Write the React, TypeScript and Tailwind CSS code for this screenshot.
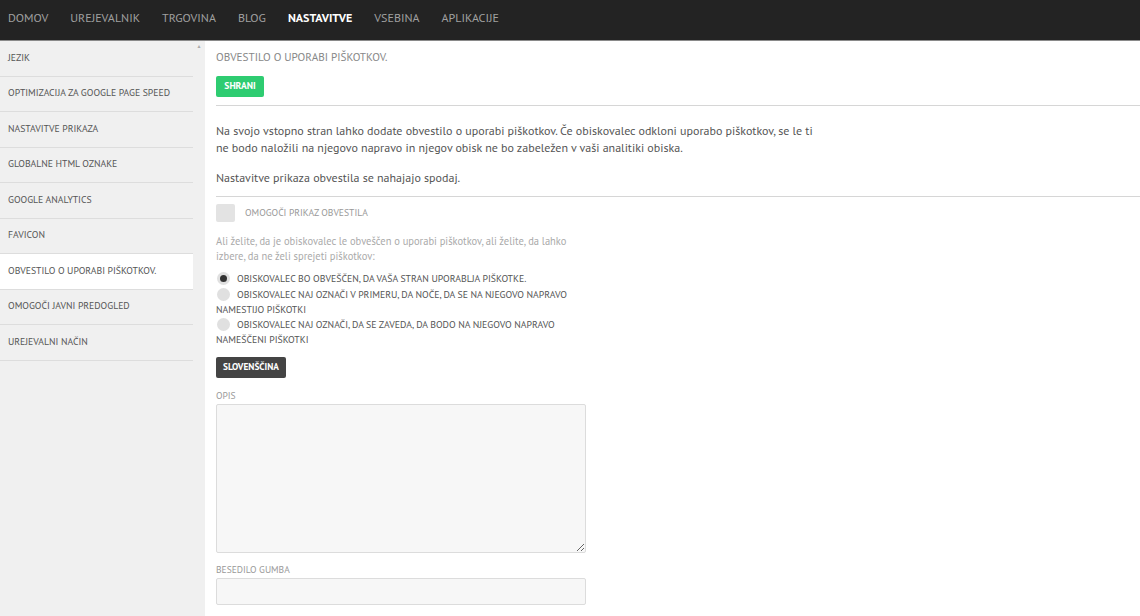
import React from 'react';

const navItems = ['DOMOV', 'UREJEVALNIK', 'TRGOVINA', 'BLOG', 'NASTAVITVE', 'VSEBINA', 'APLIKACIJE'];

const sideItems = [
    'JEZIK',
    'OPTIMIZACIJA ZA GOOGLE PAGE SPEED',
    'NASTAVITVE PRIKAZA',
    'GLOBALNE HTML OZNAKE',
    'GOOGLE ANALYTICS',
    'FAVICON',
    'OBVESTILO O UPORABI PIŠKOTKOV.',
    'OMOGOČI JAVNI PREDOGLED',
    'UREJEVALNI NAČIN',
];

const radios = [
    { label: 'OBISKOVALEC BO OBVEŠČEN, DA VAŠA STRAN UPORABLJA PIŠKOTKE.', checked: true },
    { label: 'OBISKOVALEC NAJ OZNAČI V PRIMERU, DA NOČE, DA SE NA NJEGOVO NAPRAVO NAMESTIJO PIŠKOTKI', checked: false },
    { label: 'OBISKOVALEC NAJ OZNAČI, DA SE ZAVEDA, DA BODO NA NJEGOVO NAPRAVO NAMEŠČENI PIŠKOTKI', checked: false },
];

const App: React.FC = () => {
    return (
        <div
            className="h-[616px] flex flex-col bg-white overflow-hidden"
            style={{ fontFamily: '"PT Sans", Lato, "Noto Sans", sans-serif' }}
        >
            <nav className="h-[41px] bg-[#232323] border-b border-[#8a8a8a] flex items-center pl-[8px] pb-[5px] shrink-0">
                {navItems.map((item) => (
                    <span
                        key={item}
                        className={
                            item === 'NASTAVITVE'
                                ? 'mr-[22px] text-[12px] text-white font-bold'
                                : 'mr-[22px] text-[12px] text-[#a0a0a0]'
                        }
                    >
                        {item}
                    </span>
                ))}
            </nav>

            <div className="flex flex-1 min-h-0">
                <aside className="w-[205px] bg-[#f0f0f0] flex shrink-0">
                    <ul className="w-[193px]">
                        {sideItems.map((item) => (
                            <li
                                key={item}
                                className={
                                    item === 'OBVESTILO O UPORABI PIŠKOTKOV.'
                                        ? 'h-[35.5px] flex items-center pl-[8px] text-[9.7px] text-[#555] border-b border-[#dddddd] bg-white'
                                        : 'h-[35.5px] flex items-center pl-[8px] text-[9.7px] text-[#555] border-b border-[#dddddd]'
                                }
                            >
                                {item}
                            </li>
                        ))}
                    </ul>
                    <div className="flex-1 flex justify-center pt-[3px]">
                        <span className="text-[5px] text-[#aaa] leading-none">▲</span>
                    </div>
                </aside>

                <main className="flex-1 pl-[11px] pt-[9px]">
                    <h1 className="text-[11.2px] text-[#888] leading-[14px]">OBVESTILO O UPORABI PIŠKOTKOV.</h1>
                    <button className="mt-[12px] h-[21px] w-[48px] bg-[#2ecc71] rounded-[2px] text-white text-[9.5px] font-bold">
                        SHRANI
                    </button>
                    <div className="mt-[8px] border-t border-[#d6d6d6]" />

                    <div className="pt-[16px] pb-[10px] w-[598px] text-[12px] text-[#555] leading-[17px]">
                        <p>
                            Na svojo vstopno stran lahko dodate obvestilo o uporabi piškotkov. Če obiskovalec odkloni uporabo
                            piškotkov, se le ti ne bodo naložili na njegovo napravo in njegov obisk ne bo zabeležen v vaši
                            analitiki obiska.
                        </p>
                        <p className="mt-[13px]">Nastavitve prikaza obvestila se nahajajo spodaj.</p>
                    </div>
                    <div className="border-t border-[#d6d6d6]" />

                    <div className="w-[370px]">
                        <label className="mt-[7px] flex items-center gap-[10px]">
                            <span className="w-[19px] h-[18px] bg-[#e3e3e3] rounded-[2px]" />
                            <span className="text-[9.6px] text-[#999]">OMOGOČI PRIKAZ OBVESTILA</span>
                        </label>

                        <p className="mt-[12px] text-[10.5px] text-[#aaa] leading-[15px]">
                            Ali želite, da je obiskovalec le obveščen o uporabi piškotkov, ali želite, da lahko izbere, da ne
                            želi sprejeti piškotkov:
                        </p>

                        <div className="mt-[7px] flex flex-col gap-[0.5px]">
                            {radios.map((r) => (
                                <div key={r.label} className="text-[9.75px] text-[#555] leading-[15px]">
                                    <span className="inline-flex align-middle mr-[7px] ml-[1px] w-[13px] h-[13px] rounded-full bg-[#e0e0e0] items-center justify-center -mt-[2px]">
                                        {r.checked && <span className="w-[7px] h-[7px] rounded-full bg-[#333]" />}
                                    </span>
                                    {r.label}
                                </div>
                            ))}
                        </div>

                        <button className="mt-[10px] h-[21px] w-[70px] bg-[#444] rounded-[2px] text-white text-[9.3px] font-bold">
                            SLOVENŠČINA
                        </button>

                        <div className="mt-[12px] text-[9.5px] text-[#999] leading-[12px]">OPIS</div>
                        <textarea className="mt-[2px] block w-[370px] h-[149px] bg-[#f7f7f7] border border-[#dcdcdc] rounded-[2px]" />

                        <div className="mt-[11px] text-[9.5px] text-[#999] leading-[12px]">BESEDILO GUMBA</div>
                        <input className="mt-[2px] block w-[370px] h-[27px] bg-[#f7f7f7] border border-[#dcdcdc] rounded-[2px]" />
                    </div>
                </main>
            </div>
        </div>
    );
};

export default App;
